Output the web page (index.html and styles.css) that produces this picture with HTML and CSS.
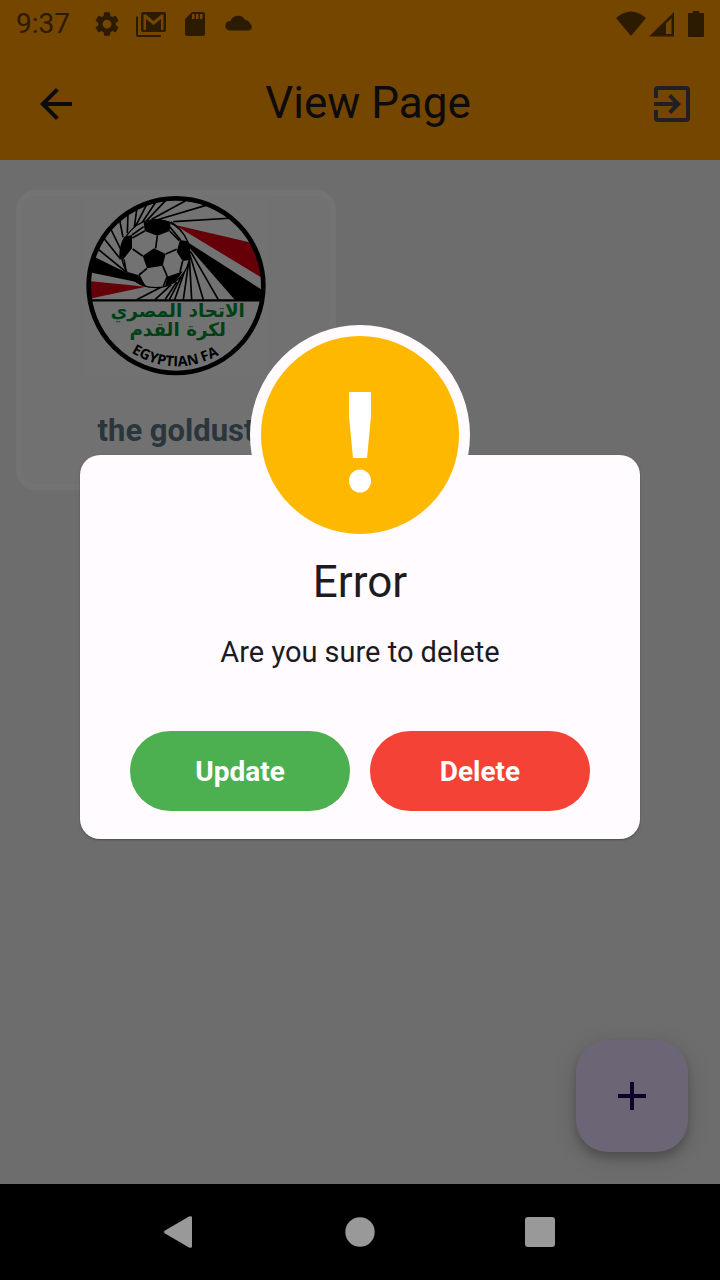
FILE: index.html
```html
<!DOCTYPE html>
<html lang="en">
<head>
<meta charset="utf-8">
<meta name="viewport" content="width=device-width, initial-scale=1">
<title>View Page</title>
<link rel="stylesheet" href="styles.css">
</head>
<body>
<div class="screen">
  <header class="top">
    <div class="status">
      <span class="status-time">9:37</span>
      <svg class="status-icon" viewBox="0 0 28 28" aria-hidden="true"><g transform="translate(-.6 -.6) scale(1.22)"><path d="M19.14 12.94c.04-.3.06-.61.06-.94 0-.32-.02-.64-.07-.94l2.03-1.58a.49.49 0 0 0 .12-.61l-1.92-3.32a.49.49 0 0 0-.59-.22l-2.39.96c-.5-.38-1.03-.7-1.62-.94l-.36-2.54a.48.48 0 0 0-.48-.41h-3.84c-.24 0-.43.17-.47.41l-.36 2.54c-.59.24-1.13.57-1.62.94l-2.39-.96a.48.48 0 0 0-.59.22L2.74 8.87a.48.48 0 0 0 .12.61l2.03 1.58c-.05.3-.09.63-.09.94s.02.64.07.94l-2.03 1.58a.49.49 0 0 0-.12.61l1.92 3.32c.12.22.37.29.59.22l2.39-.96c.5.38 1.03.7 1.62.94l.36 2.54c.05.24.24.41.48.41h3.84c.24 0 .44-.17.47-.41l.36-2.54c.59-.24 1.13-.56 1.62-.94l2.39.96c.22.08.47 0 .59-.22l1.92-3.32a.48.48 0 0 0-.12-.61l-2.01-1.58zM12 15.6a3.6 3.6 0 1 1 0-7.2 3.6 3.6 0 0 1 0 7.2z"/></g></svg>
      <svg class="status-icon" viewBox="0 0 28 28" aria-hidden="true"><path fill-rule="evenodd" d="M6 2h21q2 0 2 2v16q0 2-2 2H6q-2 0-2-2V4q0-2 2-2zM7 20h2V9l7.500 6L24 9v11h2.500V4.500h-2L16.500 11 9 4.500H6.500V20z"/><path d="M-1 6.500h2V25h23v2H1q-2 0-2-2z"/></svg>
      <svg class="status-icon" viewBox="0 0 28 28" aria-hidden="true"><path fill-rule="evenodd" d="M11 2h11q2 0 2 2v20q0 2-2 2H6q-2 0-2-2V9zM11 4v5h2.500V4zM15 4v5h2.500V4zM19 4v5h2.500V4z"/></svg>
      <svg class="status-icon" viewBox="0 0 28 28" aria-hidden="true"><path d="M4.500 20.500a4.800 4.800 0 0 1 0-9.500H5.500a8 8 0 0 1 14.500-1 5 5 0 0 1 5 3.500 4 4 0 0 1-.500 7z"/></svg>
      <span class="status-system">
        <svg width="30" height="28" viewBox="0 0 30 28" aria-hidden="true"><path d="M15 26 0 8Q15-5 30 8z"/></svg>
        <svg width="25" height="28" viewBox="0 0 25 28" aria-hidden="true"><path fill-rule="evenodd" d="M0 26.500 25 2v24.500zM17 24h5.500V8L17 13.500z"/></svg>
        <svg class="battery" width="16" height="28" viewBox="0 0 16 28" aria-hidden="true"><path d="M5 1h6v2h4q1 0 1 1v22q0 1-1 1H1q-1 0-1-1V4q0-1 1-1h4z"/></svg>
      </span>
    </div>
    <div class="appbar">
      <button class="bar-button back" type="button" aria-label="Back">
        <svg width="48" height="48" viewBox="0 0 24 24"><path d="M20 11H7.830l5.590-5.590L12 4l-8 8 8 8 1.410-1.410L7.830 13H20z"/></svg>
      </button>
      <h1 class="title">View Page</h1>
      <button class="bar-button exit" type="button" aria-label="Exit">
        <svg width="48" height="48" viewBox="0 0 24 24"><path d="M10.090 15.590 11.500 17l5-5-5-5-1.410 1.410L12.670 11H3v2h9.670zM19 3H5a2 2 0 0 0-2 2v4h2V5h14v14H5v-4H3v4a2 2 0 0 0 2 2h14a2 2 0 0 0 2-2V5a2 2 0 0 0-2-2z"/></svg>
      </button>
    </div>
  </header>

  <main class="content">
    <article class="card">
      <svg class="crest" viewBox="258 48 540 540" role="img" aria-label="Egyptian FA">
        <defs><clipPath id="disc"><circle cx="528" cy="317" r="264"/></clipPath></defs>
        <rect class="crest-bg" x="258" y="48" width="540" height="540"/>
        <g clip-path="url(#disc)">
          <g class="ray">
            <path d="M700 114 520 125M625 74 470 120M565 58 455 118M500 58 438 124M466 68 425 130M440 74 406 140M410 90 403 142M384 100 382 160M358 115 369 172M328 138 366 216M308 170 362 238M285 200 378 276M365 232 380 276M375 230 384 276"/>
            <path d="M410 359 490 318M465 359 514 314M495 359 530 306M508 359 544 290M524 359 558 262M550 359 567 240M575 359 568 230M610 359 570 225M655 359 572 215"/>
          </g>
          <path d="M265 222 380 278 418 288 440 320 410 306 265 276z"/>
          <path class="red" d="M265 303 438 320 265 357zM523 134 745 186 790 200V296z"/>
          <path d="M562 186 790 332V360H705L572 208z"/>
          <path class="ray" d="M512 126Q545 145 562 186"/>
          <path class="ray-wide" d="M265 361H792"/>
        </g>
        <circle class="ball" cx="467" cy="221" r="102"/>
        <path d="M431 126Q470 110 512 126L509 153 472 167 434 153zM462 205 497 222 488 257 441 265 428 228zM373 170 396 165V205L370 238 358 232Q357 195 373 170zM540 180 565 184Q576 212 568 240L548 243 530 215zM380 275 414 285 440 320Q400 312 380 275zM502 290 548 274Q532 307 495 320z"/>
        <path class="seam" d="M434 153 397 174M472 167 467 205M509 153 538 182M428 228 398 207M497 222 530 208M441 265 417 285M488 257 502 290M372 238 378 272M396 165 431 140M509 140 542 180M417 285 430 312M502 290 490 318M548 243 540 276"/>
        <circle class="rim" cx="528" cy="317" r="262"/>
        <g class="arabic" direction="rtl">
          <text x="533" y="412">الاتحاد المصري</text>
          <text x="533" y="467">لكرة القدم</text>
        </g>
        <path id="arc" fill="none" d="M363 496Q520 617 690 506"/>
        <text class="latin"><textPath href="#arc" startOffset="50%">EGYPTIAN FA</textPath></text>
      </svg>
      <h2 class="card-name">the goldust</h2>
    </article>
    <button class="fab" type="button" aria-label="Add">
      <svg width="48" height="48" viewBox="0 0 24 24"><path d="M19 13h-6v6h-2v-6H5v-2h6V5h2v6h6z"/></svg>
    </button>
  </main>

  <div class="scrim">
    <section class="dialog" role="alertdialog" aria-modal="true" aria-labelledby="dialog-title" aria-describedby="dialog-text">
      <div class="badge">
        <svg width="24" height="104" viewBox="0 0 24 104" aria-hidden="true"><path d="M1 2h22v24l-4 42H5L1 26z"/><ellipse cx="12" cy="91" rx="11" ry="11.500"/></svg>
      </div>
      <div class="panel">
        <h2 class="dialog-title" id="dialog-title">Error</h2>
        <p class="dialog-text" id="dialog-text">Are you sure to delete</p>
        <div class="actions">
          <button class="action update" type="button">Update</button>
          <button class="action delete" type="button">Delete</button>
        </div>
      </div>
    </section>
  </div>
</div>

<nav class="system-nav" aria-label="System">
  <button class="nav-button" type="button" aria-label="Back"><svg width="32" height="32" viewBox="0 0 32 32"><path d="M1 14.500 25 .5q3-1 3 1v29q0 2-3 1L1 17.500q-2-1.500 0-3z"/></svg></button>
  <button class="nav-button" type="button" aria-label="Home"><svg width="32" height="32" viewBox="0 0 32 32"><circle cx="16" cy="16" r="14.700"/></svg></button>
  <button class="nav-button" type="button" aria-label="Recent apps"><svg width="32" height="32" viewBox="0 0 32 32"><rect x="1" y="1" width="30" height="30" rx="3"/></svg></button>
</nav>
</body>
</html>
```
FILE: styles.css
```css
* {
  box-sizing: border-box;
}

body {
  display: flex;
  flex-direction: column;
  min-height: 100vh;
  margin: 0;
  background: #000;
  color: #1c1b1f;
  font-family: Roboto, "Liberation Sans", sans-serif;
}

h1,
h2,
p {
  margin: 0;
  font-weight: 400;
}

button {
  padding: 0;
  border: 0;
  background: none;
  color: inherit;
  font: inherit;
  cursor: pointer;
}

svg {
  display: block;
  flex: none;
  fill: currentColor;
}

.screen {
  position: relative;
  display: flex;
  flex: 1;
  flex-direction: column;
  background: #ededed;
}

.top {
  background: #ff9800;
}

.status {
  display: flex;
  align-items: center;
  gap: 16px;
  height: 48px;
  padding: 0 16px;
  color: #603b00;
}

.status-time {
  margin-right: 7px;
  font-size: 28px;
  line-height: 50px;
}

.status-icon {
  width: 28px;
  height: 28px;
  overflow: visible;
}

.status-system {
  display: flex;
  gap: 3px;
  margin-left: auto;
}

.battery {
  margin-left: 11px;
}

.appbar {
  display: flex;
  align-items: center;
  height: 112px;
}

.bar-button {
  display: flex;
  align-items: center;
  justify-content: center;
  height: 96px;
}

.back {
  width: 112px;
}

.exit {
  width: 96px;
  color: #49454f;
}

.title {
  flex: 1;
  padding-bottom: 2px;
  font-size: 44px;
  line-height: 56px;
  text-align: center;
}

.content {
  position: relative;
  display: grid;
  flex: 1;
  grid-template-columns: repeat(2, 1fr);
  align-items: start;
  gap: 48px;
  padding: 30px 16px;
}

.card {
  display: flex;
  flex-direction: column;
  align-items: center;
  min-height: 300px;
  border: 6px solid #fafafa;
  border-radius: 20px;
  background: #f6f6f6;
}

.crest {
  width: 180px;
  height: 180px;
  fill: #000;
}

.crest-bg {
  fill: #f9f9f9;
}

.ray,
.ray-wide,
.seam,
.rim {
  fill: none;
  stroke: #000;
  stroke-width: 5px;
}

.ray-wide {
  stroke-width: 7px;
}

.rim {
  stroke-width: 14px;
}

.ball {
  fill: #f9f9f9;
  stroke: #000;
  stroke-width: 4px;
}

.red {
  fill: #dc0014;
}

.arabic {
  fill: #008c32;
  font-family: "DejaVu Sans", sans-serif;
  font-size: 55px;
  font-weight: 700;
  text-anchor: middle;
}

.latin {
  font-family: "Open Sans", sans-serif;
  font-size: 43px;
  font-weight: 700;
  text-anchor: middle;
}

.card-name {
  margin-top: 35px;
  color: #5c7682;
  font-size: 31px;
  font-weight: 700;
  line-height: 40px;
}

.fab {
  position: absolute;
  right: 32px;
  bottom: 32px;
  display: flex;
  align-items: center;
  justify-content: center;
  width: 112px;
  height: 112px;
  border-radius: 32px;
  background: #eaddff;
  box-shadow: 0 6px 10px rgba(0, 0, 0, 0.2), 0 6px 24px rgba(0, 0, 0, 0.15);
  color: #21005d;
}

.scrim {
  position: absolute;
  inset: 0;
  display: flex;
  align-items: center;
  justify-content: center;
  padding: 0 80px 20px;
  background: rgba(0, 0, 0, 0.54);
}

.dialog {
  display: flex;
  flex: 1;
  flex-direction: column;
  align-items: center;
}

.badge {
  z-index: 1;
  display: flex;
  align-items: center;
  justify-content: center;
  width: 220px;
  height: 220px;
  margin-bottom: -90px;
  padding-top: 14px;
  border: 11px solid #fffbff;
  border-radius: 50%;
  background: #ffb800;
  color: #fff;
}

.panel {
  width: 100%;
  padding: 99px 50px 28px;
  border-radius: 20px;
  background: #fffbff;
  box-shadow: 0 1px 2px rgba(0, 0, 0, 0.3);
  text-align: center;
}

.dialog-title {
  font-size: 44px;
  line-height: 56px;
}

.dialog-text {
  margin-top: 22px;
  font-size: 29px;
  line-height: 40px;
}

.actions {
  display: flex;
  gap: 20px;
  margin-top: 59px;
}

.action {
  flex: 1;
  height: 80px;
  border-radius: 40px;
  color: #fff;
  font-size: 28px;
  font-weight: 700;
}

.update {
  background: #4caf50;
}

.delete {
  background: #f44336;
}

.system-nav {
  display: flex;
  justify-content: center;
  height: 96px;
  color: #999;
}

.nav-button {
  display: flex;
  align-items: center;
  justify-content: center;
  width: 25%;
}
```
